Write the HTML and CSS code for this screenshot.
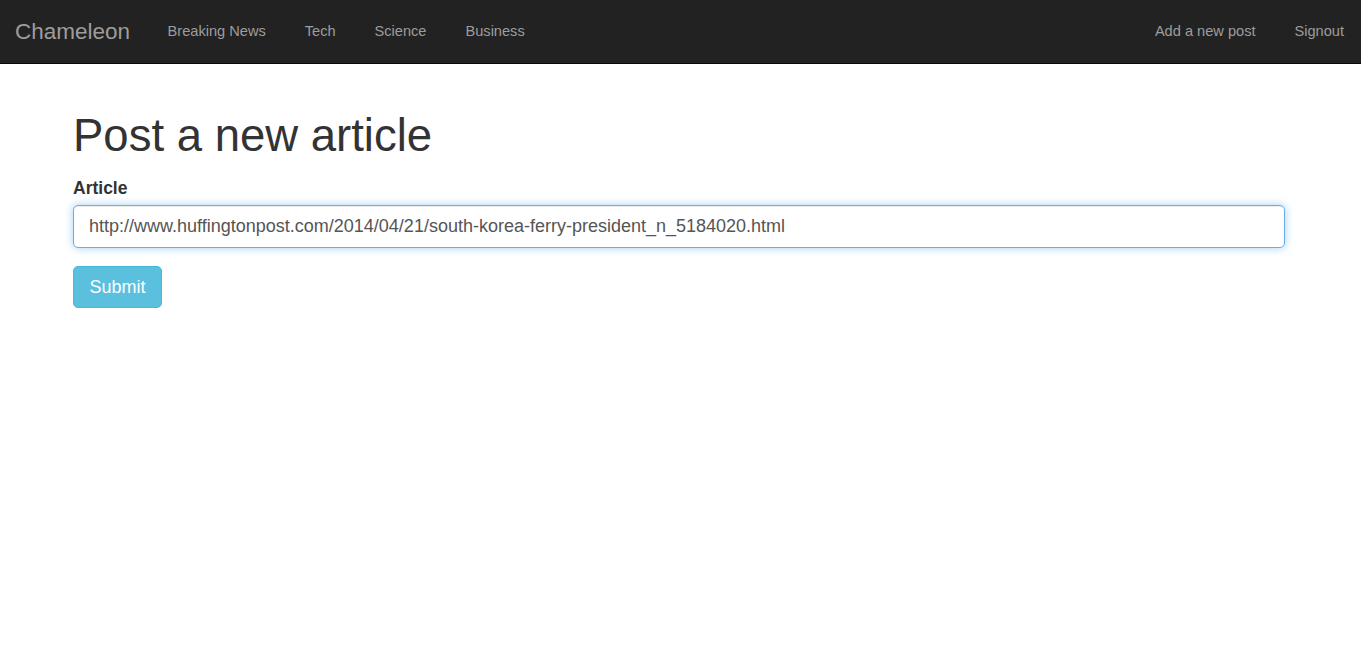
FILE: index.html
```html
<!DOCTYPE html>
<html>
<head>
<meta charset="utf-8">
<title>Chameleon</title>
<link rel="stylesheet" href="styles.css">
</head>
<body>
<nav class="navbar">
  <div class="nav-left">
    <a class="brand" href="#">Chameleon</a>
    <ul class="nav">
      <li><a href="#">Breaking News</a></li>
      <li><a href="#">Tech</a></li>
      <li><a href="#">Science</a></li>
      <li><a href="#">Business</a></li>
    </ul>
  </div>
  <ul class="nav nav-right">
    <li><a href="#">Add a new post</a></li>
    <li><a href="#">Signout</a></li>
  </ul>
</nav>
<main class="container">
  <h1 class="title">Post a new article</h1>
  <form class="form">
    <label class="label" for="article">Article</label>
    <input class="input" id="article" type="text" value="http://www.huffingtonpost.com/2014/04/21/south-korea-ferry-president_n_5184020.html">
    <button class="btn" type="button">Submit</button>
  </form>
</main>
</body>
</html>
```

FILE: styles.css
```css
* { box-sizing: border-box; }
html, body { margin: 0; padding: 0; background: #fff; }
body {
  font-family: "Liberation Sans", Arial, sans-serif;
  color: #333;
}
.navbar {
  display: flex;
  justify-content: space-between;
  align-items: center;
  height: 64px;
  background: #222;
  border-bottom: 1px solid #080808;
}
.nav-left { display: flex; align-items: center; }
.brand {
  color: #9d9d9d;
  text-decoration: none;
  font-size: 22.5px;
  padding: 0 18px 0 15px;
  line-height: 63px;
}
.nav {
  display: flex;
  list-style: none;
  margin: 0;
  padding: 0;
}
.nav a {
  display: block;
  color: #9d9d9d;
  text-decoration: none;
  font-size: 14.6px;
  padding: 0 19.5px;
  line-height: 63px;
}
.nav-right li:last-child a { padding-right: 17px; }
.container {
  padding: 0 76px 0 73px;
}
.title {
  font-size: 45.5px;
  font-weight: 400;
  margin: 0;
  padding-top: 46px;
  line-height: 52px;
  color: #333;
}
.form { display: flex; flex-direction: column; align-items: flex-start; }
.label {
  font-weight: 700;
  font-size: 17.5px;
  margin-top: 15px;
  margin-bottom: 6px;
  line-height: 22px;
}
.input {
  width: 100%;
  height: 43px;
  padding: 0 15px;
  font-family: "Liberation Sans", Arial, sans-serif;
  font-size: 18px;
  color: #555;
  border: 1px solid #66afe9;
  border-radius: 5px;
  outline: 0;
  box-shadow: inset 0 1px 1px rgba(0,0,0,.075), 0 0 8px rgba(102,175,233,.6);
}
.btn {
  margin-top: 18px;
  height: 42px;
  padding: 0 15.5px;
  font-family: "Liberation Sans", Arial, sans-serif;
  font-size: 18px;
  color: #fff;
  background: #5bc0de;
  border: 1px solid #46b8da;
  border-radius: 5px;
}
```
